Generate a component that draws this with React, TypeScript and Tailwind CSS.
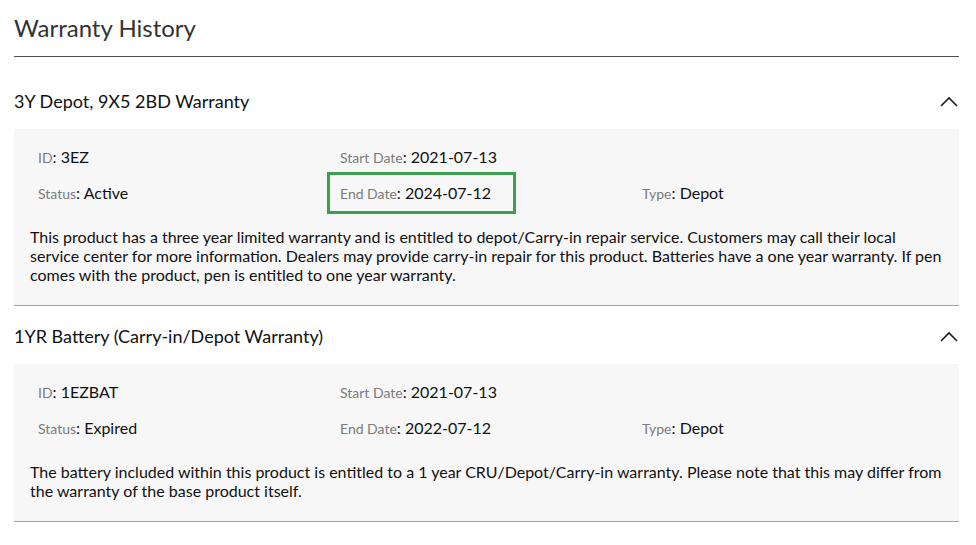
type Warranty = {
  title: string;
  id: string;
  status: string;
  start: string;
  end: string;
  type: string;
  description: string;
  highlightEnd?: boolean;
};

const warranties: Warranty[] = [
  {
    title: "3Y Depot, 9X5 2BD Warranty",
    id: "3EZ",
    status: "Active",
    start: "2021-07-13",
    end: "2024-07-12",
    type: "Depot",
    highlightEnd: true,
    description:
      "This product has a three year limited warranty and is entitled to depot/Carry-in repair service. Customers may call their local service center for more information. Dealers may provide carry-in repair for this product. Batteries have a one year warranty. If pen comes with the product, pen is entitled to one year warranty.",
  },
  {
    title: "1YR Battery (Carry-in/Depot Warranty)",
    id: "1EZBAT",
    status: "Expired",
    start: "2021-07-13",
    end: "2022-07-12",
    type: "Depot",
    description:
      "The battery included within this product is entitled to a 1 year CRU/Depot/Carry-in warranty. Please note that this may differ from the warranty of the base product itself.",
  },
];

function Field({ label, value, highlight }: { label: string; value: string; highlight?: boolean }) {
  return (
    <div className="relative h-6 leading-6 whitespace-nowrap">
      <span className="text-[14px] text-[#7b7b7b]">{label}</span>
      <span className="text-[16px] text-[#111]">: {value}</span>
      {highlight && (
        <span className="pointer-events-none absolute left-[-13px] top-[-9px] h-[42px] w-[189px] border-[3px] border-[#3d9f50]" />
      )}
    </div>
  );
}

function ChevronUp() {
  return (
    <svg width="18" height="11" viewBox="0 0 18 11" fill="none" className="mr-[1px]">
      <path d="M1 10L9 2L17 10" stroke="#1a1a1a" strokeWidth="1.6" />
    </svg>
  );
}

function WarrantySection({ w, first }: { w: Warranty; first: boolean }) {
  return (
    <section className={first ? "mt-8" : "mt-[18px]"}>
      <div className="flex h-6 items-center justify-between">
        <h2 className="text-[18px] leading-6 text-[#111]">{w.title}</h2>
        <ChevronUp />
      </div>
      <div className="mt-4 border-b border-[#a3a3a3] bg-[#f7f7f7] px-4 pb-[21px] pt-4">
        <div className="grid grid-cols-[302px_302px_1fr] gap-y-3 pl-2">
          <Field label="ID" value={w.id} />
          <Field label="Start Date" value={w.start} />
          <div />
          <Field label="Status" value={w.status} />
          <Field label="End Date" value={w.end} highlight={w.highlightEnd} />
          <Field label="Type" value={w.type} />
        </div>
        <p className="mt-[22px] text-[16px] leading-[19px] text-[#111]">{w.description}</p>
      </div>
    </section>
  );
}

export default function App() {
  return (
    <div className="h-[545px] w-[976px] overflow-hidden bg-white font-['Lato','Open_Sans',sans-serif]">
      <div className="pl-[14px] pr-[17px]">
        <h1 className="border-b border-[#505050] pb-3 pt-3 text-[24px] leading-8 text-[#333]">Warranty History</h1>
        {warranties.map((w, i) => (
          <WarrantySection key={w.id} w={w} first={i === 0} />
        ))}
      </div>
    </div>
  );
}
